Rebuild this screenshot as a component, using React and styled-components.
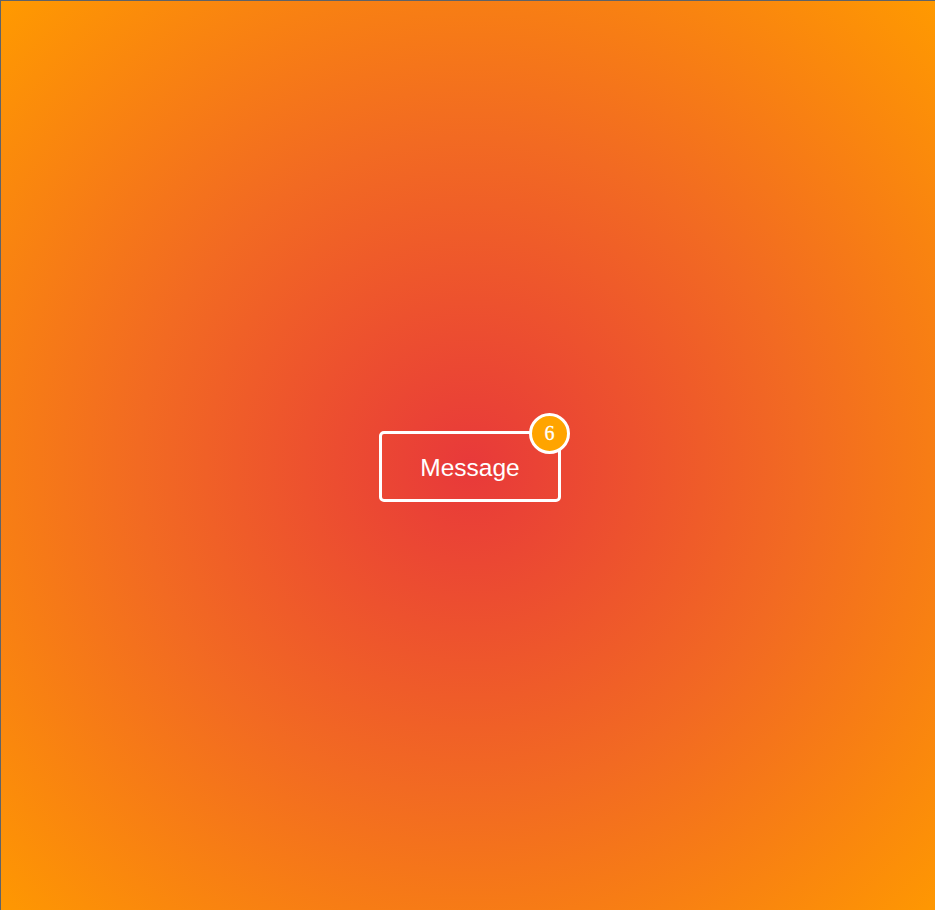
import React from "react";
import styled, { createGlobalStyle } from "styled-components";

const Global = createGlobalStyle`
  html, body { margin: 0; padding: 0; overflow: hidden; }
  body { width: 935px; height: 910px; }
`;

const Stage = styled.div`
  box-sizing: border-box;
  width: 940px;
  height: 933px;
  border: 1px solid #5f6368;
  background: radial-gradient(ellipse at center, #e8393a 0%, #f26a22 50%, #ff9a00 100%);
  display: flex;
  align-items: center;
  justify-content: center;
`;

const Button = styled.button`
  position: relative;
  box-sizing: border-box;
  width: 182px;
  height: 71px;
  border: 3px solid #fff;
  border-radius: 5px;
  background: transparent;
  color: #fff;
  font-family: "Liberation Sans", Arial, sans-serif;
  font-size: 24.5px;
  padding: 2px 0 0;
  cursor: pointer;
`;

const Badge = styled.span`
  position: absolute;
  top: -21px;
  right: -12px;
  box-sizing: border-box;
  width: 41px;
  height: 41px;
  border-radius: 50%;
  border: 3px solid #fff;
  background: #ffa400;
  color: #fff;
  font-family: "Liberation Serif", "Times New Roman", serif;
  font-size: 20px;
  font-weight: 500;
  -webkit-text-stroke: 0.3px #fff;
  display: flex;
  align-items: center;
  justify-content: center;
`;

export default function App() {
  return (
    <>
      <Global />
      <Stage>
        <Button>
          Message
          <Badge>6</Badge>
        </Button>
      </Stage>
    </>
  );
}
